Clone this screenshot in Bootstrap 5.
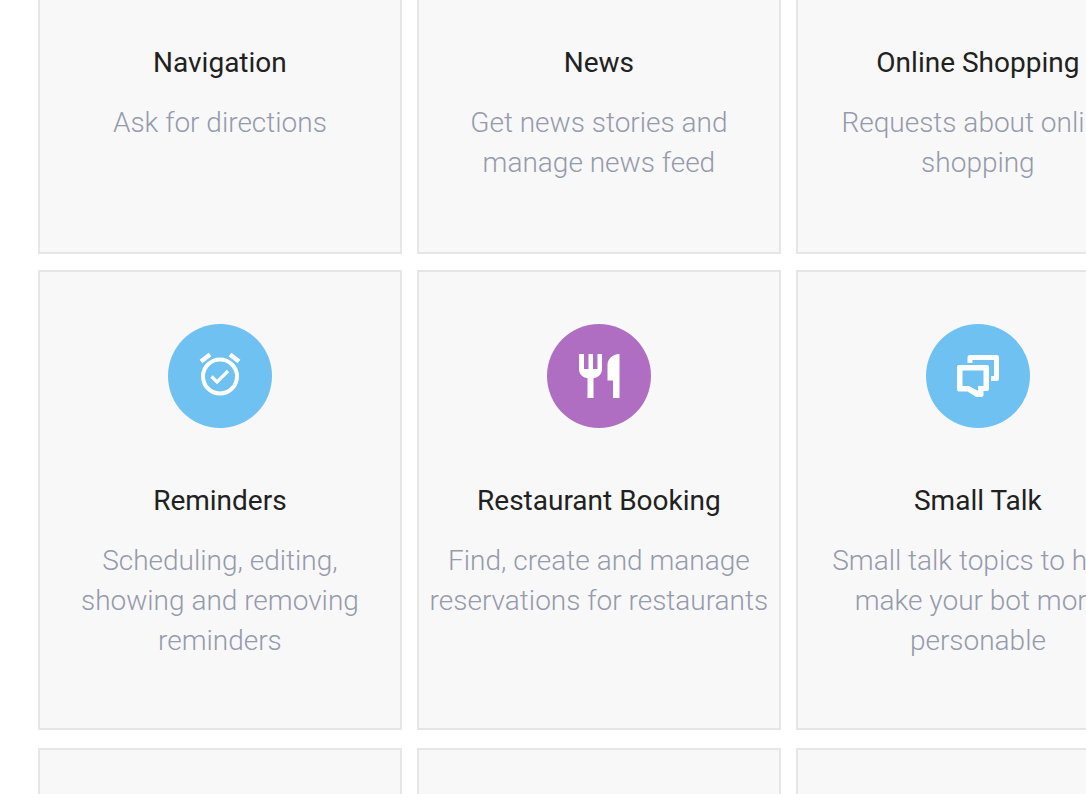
<!DOCTYPE html>
<html lang="en">
<head>
<meta charset="utf-8">
<meta name="viewport" content="width=device-width, initial-scale=1">
<title>Built-in intents</title>
<link href="https://cdn.jsdelivr.net/npm/bootstrap@5.3.0/dist/css/bootstrap.min.css" rel="stylesheet">
<style>
body { font-family: Roboto, "Liberation Sans", sans-serif; }
.catalog { padding-left: 3.5vw; }
.tile-row { gap: 1.4vw; margin-bottom: 18px; }
.tile { flex: 0 0 33.5vw; background: #f8f8f8; border: 2px solid #e6e6e6; border-radius: 0; }
.tile .card-body { padding: 52px 8px 67px; }
.tile-row.cut { margin-bottom: 16px; }
.tile-row.cut .tile { border-top: 0; }
.tile-row.cut .card-body { padding: 43px 8px 69px; }
.tile-row.next .tile { min-height: 460px; }
.tile-icon { width: 104px; height: 104px; margin-bottom: 53px; }
.tile-title { font-size: 28px; line-height: 40px; font-weight: 400; color: #212121; margin-bottom: 20px; }
.tile-text { font-size: 28px; line-height: 40px; font-weight: 300; color: #959aac; margin: 0; }
</style>
</head>
<body>
<main class="catalog vh-100 overflow-hidden">
  <section class="tile-row cut d-flex">
    <article class="card tile text-center"><div class="card-body">
      <h2 class="tile-title">Navigation</h2>
      <p class="tile-text">Ask for directions</p>
    </div></article>
    <article class="card tile text-center"><div class="card-body">
      <h2 class="tile-title">News</h2>
      <p class="tile-text">Get news stories and<br>manage news feed</p>
    </div></article>
    <article class="card tile text-center"><div class="card-body">
      <h2 class="tile-title">Online Shopping</h2>
      <p class="tile-text">Requests about online<br>shopping</p>
    </div></article>
  </section>
  <section class="tile-row d-flex">
    <article class="card tile text-center"><div class="card-body">
      <svg class="tile-icon d-block mx-auto" viewBox="0 0 104 104" aria-hidden="true">
        <circle cx="52" cy="52" r="52" fill="#6ec1f1"/>
        <g fill="none" stroke="#fff"><circle cx="52" cy="52.500" r="17" stroke-width="4"/>
        <path d="M43.500 52.500l5.500 5.500 11-11" stroke-width="3.200"/>
        <path d="M33 37.500l9-7M71 37.500l-9-7" stroke-width="4.500"/></g>
      </svg>
      <h2 class="tile-title">Reminders</h2>
      <p class="tile-text">Scheduling, editing,<br>showing and removing<br>reminders</p>
    </div></article>
    <article class="card tile text-center"><div class="card-body">
      <svg class="tile-icon d-block mx-auto" viewBox="0 0 104 104" aria-hidden="true">
        <circle cx="52" cy="52" r="52" fill="#af6ec2"/>
        <path fill="#fff" d="M32 30h5v15h4.500V30h4.500v15h4.500V30H55v15c0 5-3.500 8.500-8.500 9.200V74h-6V54.200C35.500 53.500 32 50 32 45zM72.500 30v44H66V56.500h-5.500V41c0-6 5-11 12-11z"/>
      </svg>
      <h2 class="tile-title">Restaurant Booking</h2>
      <p class="tile-text">Find, create and manage<br>reservations for restaurants</p>
    </div></article>
    <article class="card tile text-center"><div class="card-body">
      <svg class="tile-icon d-block mx-auto" viewBox="0 0 104 104" aria-hidden="true">
        <circle cx="52" cy="52" r="52" fill="#6ec1f1"/>
        <path fill="none" stroke="#fff" stroke-width="5" stroke-linejoin="round" d="M44 39v-5.500h26.500V54.500H65"/>
        <path fill="#fff" fill-rule="evenodd" d="M33 41h28q2 0 2 2v22q0 2-2 2h-3.500v4q0 2-2 2H51q-1 0-2-.7L41.500 67.500H33q-2 0-2-2V43q0-2 2-2zM36.500 46.500V62H43l9 5v-5h5.500V46.500z"/>
      </svg>
      <h2 class="tile-title">Small Talk</h2>
      <p class="tile-text">Small talk topics to help<br>make your bot more<br>personable</p>
    </div></article>
  </section>
  <section class="tile-row next d-flex">
    <article class="card tile"></article>
    <article class="card tile"></article>
    <article class="card tile"></article>
  </section>
</main>
<script src="https://cdn.jsdelivr.net/npm/bootstrap@5.3.0/dist/js/bootstrap.bundle.min.js"></script>
</body>
</html>
